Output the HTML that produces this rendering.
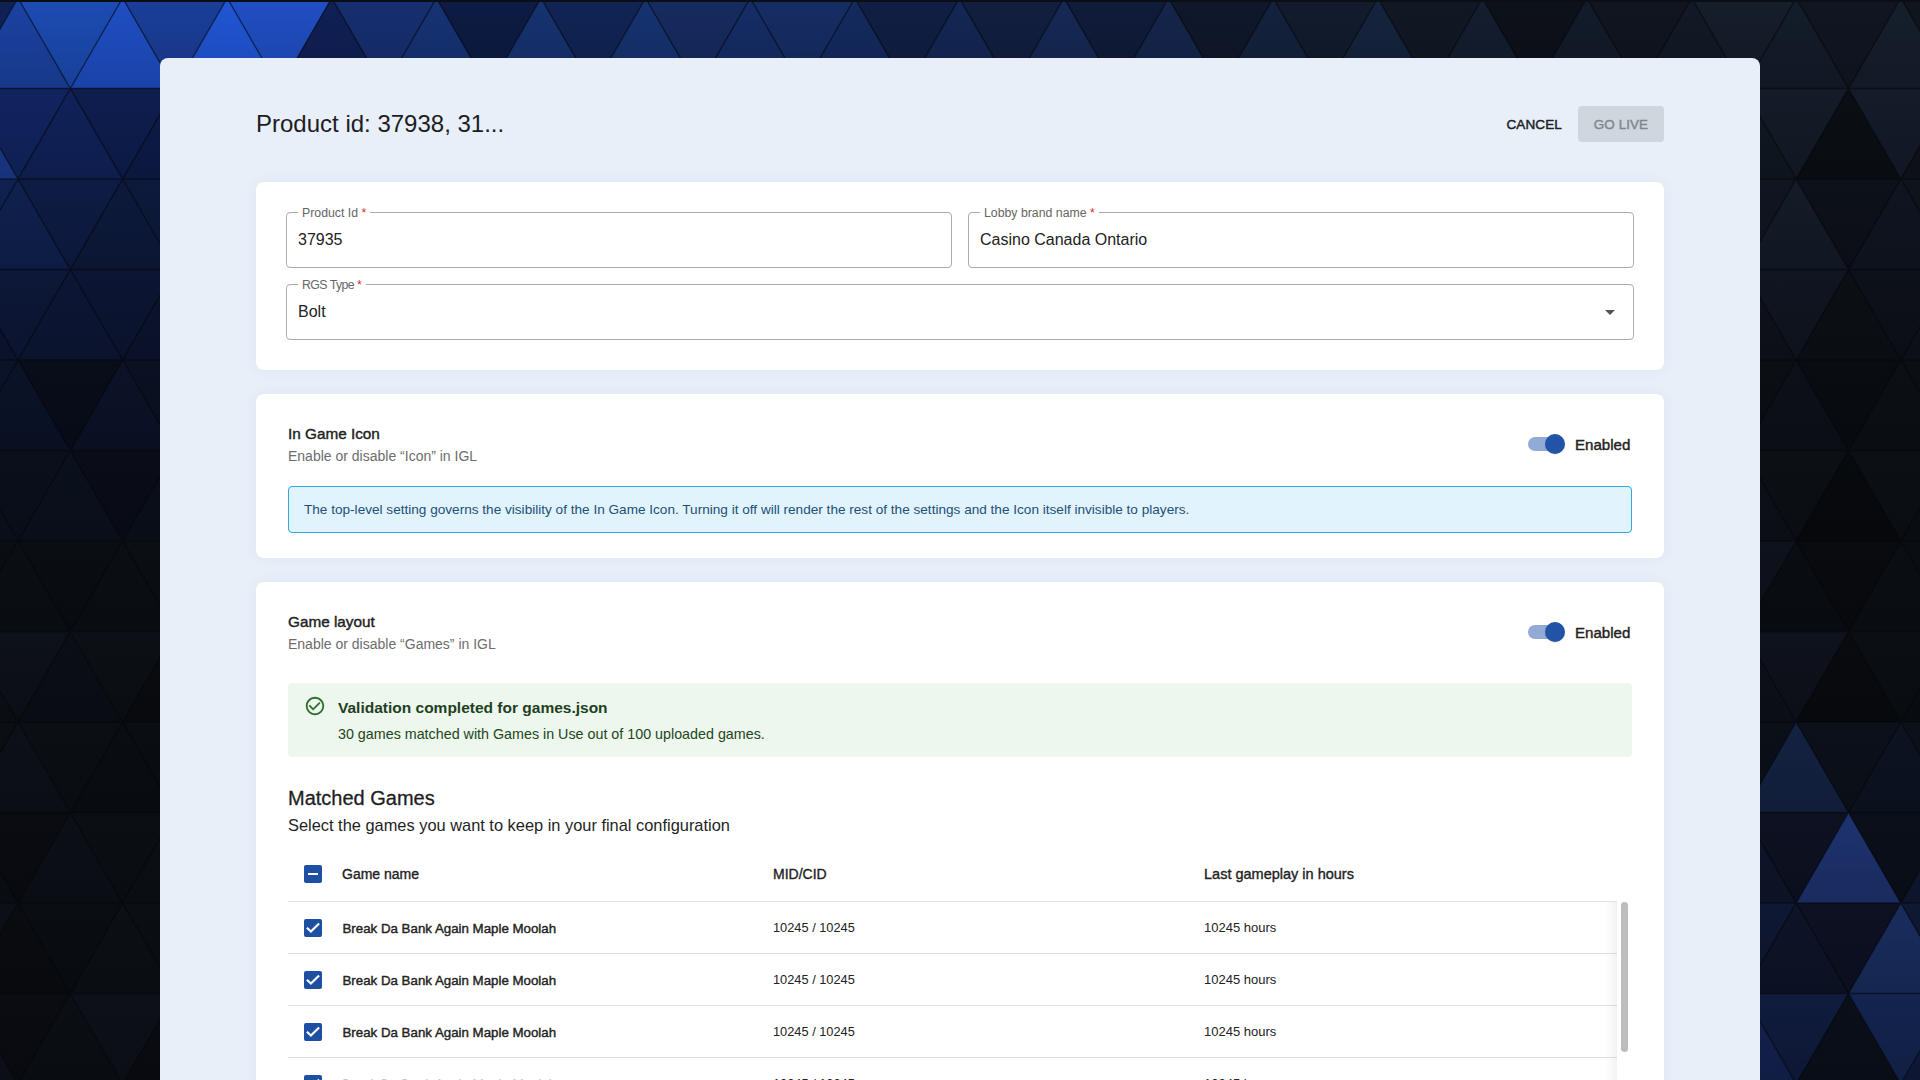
<!DOCTYPE html><html><head><meta charset="utf-8"><style>
*{margin:0;padding:0;box-sizing:border-box}
html,body{width:1920px;height:1080px;overflow:hidden;font-family:"Liberation Sans",sans-serif;color:#1f1f1f}
body{position:relative;background:#0c1220}
.abs{position:absolute}
#panel{position:absolute;left:160px;top:58px;width:1600px;height:1100px;background:#e8eff9;border-radius:8px 8px 0 0}
.card{position:absolute;left:96px;width:1408px;background:#fff;border-radius:8px;box-shadow:0 0 14px rgba(30,50,90,0.055)}
.title{position:absolute;left:96px;top:52px;font-size:24px;color:#1d1d1f;white-space:nowrap}
.btn-cancel{position:absolute;left:1346.5px;top:58.5px;font-size:13.5px;-webkit-text-stroke:0.45px #1e2126;color:#1e2126;letter-spacing:0.1px}
.btn-live{position:absolute;left:1418px;top:48px;width:86px;height:36px;border-radius:4px;background:#d0d6de;color:#7f868f;font-size:13.4px;-webkit-text-stroke:0.4px #7f868f;letter-spacing:0.1px;text-align:center;line-height:37px}
.field{position:absolute;border:1px solid #ababab;border-radius:4px;height:56px}
.field .lbl{position:absolute;left:11px;top:-7px;background:#fff;padding:0 4px;font-size:12.3px;color:#666;line-height:14px;white-space:nowrap}
.field .lbl b{color:#d32f2f;font-weight:normal}
.field .val{position:absolute;left:11px;top:18px;font-size:16px;color:#222;line-height:18px}
.sec-title{position:absolute;left:32px;font-size:15.3px;-webkit-text-stroke:0.4px #222;color:#222;white-space:nowrap}
.sec-sub{position:absolute;left:32px;font-size:14px;color:#6d6d6d}
.toggle{position:absolute;left:1271px;width:40px;height:20px}
.toggle .track{position:absolute;left:1px;top:3px;width:34px;height:14px;border-radius:7px;background:#93a9d6}
.toggle .thumb{position:absolute;left:18px;top:0;width:20px;height:20px;border-radius:50%;background:#2154a7;box-shadow:0 0.5px 1.5px rgba(0,0,0,0.15)}
.enabled{position:absolute;left:1319px;font-size:15.1px;-webkit-text-stroke:0.4px #222;color:#222}
.info{position:absolute;left:32px;width:1344px;height:47px;border:1px solid #35a6dc;border-radius:4px;background:#e1f4fd;color:#1e4f78;font-size:13.6px;padding-left:15px;line-height:45px}
.success{position:absolute;left:32px;width:1344px;height:74px;border-radius:4px;background:#edf7ed}
.th{position:absolute;font-size:14px;-webkit-text-stroke:0.35px #222;color:#222;white-space:nowrap}
.td{position:absolute;font-size:13px;color:#222;white-space:nowrap}
.cb{position:absolute;left:48px;width:18px;height:18px;border-radius:2px;background:#1f4fa3}
.row-line{position:absolute;left:32px;width:1329px;height:1px;background:#e0e0e0}
</style></head><body>
<svg width="1920" height="1080" viewBox="0 0 1920 1080" style="position:absolute;left:0;top:0">
<defs><linearGradient id="g1" x1="0" y1="0" x2="0" y2="1"><stop offset="0" stop-color="#102256"/><stop offset="1" stop-color="#0e1d48"/></linearGradient><linearGradient id="g2" x1="0" y1="0" x2="0" y2="1"><stop offset="0" stop-color="#1c42a3"/><stop offset="1" stop-color="#173889"/></linearGradient><linearGradient id="g3" x1="0" y1="0" x2="0" y2="1"><stop offset="0" stop-color="#1c4cb4"/><stop offset="1" stop-color="#174097"/></linearGradient><linearGradient id="g4" x1="0" y1="0" x2="0" y2="1"><stop offset="0" stop-color="#1f4fc5"/><stop offset="1" stop-color="#1a43a6"/></linearGradient><linearGradient id="g5" x1="0" y1="0" x2="0" y2="1"><stop offset="0" stop-color="#1a3e9a"/><stop offset="1" stop-color="#163482"/></linearGradient><linearGradient id="g6" x1="0" y1="0" x2="0" y2="1"><stop offset="0" stop-color="#2156d6"/><stop offset="1" stop-color="#1c48b4"/></linearGradient><linearGradient id="g7" x1="0" y1="0" x2="0" y2="1"><stop offset="0" stop-color="#204fc5"/><stop offset="1" stop-color="#1b43a6"/></linearGradient><linearGradient id="g8" x1="0" y1="0" x2="0" y2="1"><stop offset="0" stop-color="#102056"/><stop offset="1" stop-color="#0e1b48"/></linearGradient><linearGradient id="g9" x1="0" y1="0" x2="0" y2="1"><stop offset="0" stop-color="#162f71"/><stop offset="1" stop-color="#13285f"/></linearGradient><linearGradient id="g10" x1="0" y1="0" x2="0" y2="1"><stop offset="0" stop-color="#163376"/><stop offset="1" stop-color="#132b63"/></linearGradient><linearGradient id="g11" x1="0" y1="0" x2="0" y2="1"><stop offset="0" stop-color="#0d1c44"/><stop offset="1" stop-color="#0b173a"/></linearGradient><linearGradient id="g12" x1="0" y1="0" x2="0" y2="1"><stop offset="0" stop-color="#163371"/><stop offset="1" stop-color="#132b5f"/></linearGradient><linearGradient id="g13" x1="0" y1="0" x2="0" y2="1"><stop offset="0" stop-color="#112455"/><stop offset="1" stop-color="#0e1f47"/></linearGradient><linearGradient id="g14" x1="0" y1="0" x2="0" y2="1"><stop offset="0" stop-color="#163371"/><stop offset="1" stop-color="#132b5f"/></linearGradient><linearGradient id="g15" x1="0" y1="0" x2="0" y2="1"><stop offset="0" stop-color="#162b60"/><stop offset="1" stop-color="#132451"/></linearGradient><linearGradient id="g16" x1="0" y1="0" x2="0" y2="1"><stop offset="0" stop-color="#152d67"/><stop offset="1" stop-color="#122656"/></linearGradient><linearGradient id="g17" x1="0" y1="0" x2="0" y2="1"><stop offset="0" stop-color="#162d65"/><stop offset="1" stop-color="#132655"/></linearGradient><linearGradient id="g18" x1="0" y1="0" x2="0" y2="1"><stop offset="0" stop-color="#142b60"/><stop offset="1" stop-color="#112451"/></linearGradient><linearGradient id="g19" x1="0" y1="0" x2="0" y2="1"><stop offset="0" stop-color="#101f44"/><stop offset="1" stop-color="#0e1a3a"/></linearGradient><linearGradient id="g20" x1="0" y1="0" x2="0" y2="1"><stop offset="0" stop-color="#142755"/><stop offset="1" stop-color="#112047"/></linearGradient><linearGradient id="g21" x1="0" y1="0" x2="0" y2="1"><stop offset="0" stop-color="#121f40"/><stop offset="1" stop-color="#0f1a36"/></linearGradient><linearGradient id="g22" x1="0" y1="0" x2="0" y2="1"><stop offset="0" stop-color="#162955"/><stop offset="1" stop-color="#132247"/></linearGradient><linearGradient id="g23" x1="0" y1="0" x2="0" y2="1"><stop offset="0" stop-color="#0f1c3a"/><stop offset="1" stop-color="#0d1731"/></linearGradient><linearGradient id="g24" x1="0" y1="0" x2="0" y2="1"><stop offset="0" stop-color="#15254c"/><stop offset="1" stop-color="#122040"/></linearGradient><linearGradient id="g25" x1="0" y1="0" x2="0" y2="1"><stop offset="0" stop-color="#0f182b"/><stop offset="1" stop-color="#0d1424"/></linearGradient><linearGradient id="g26" x1="0" y1="0" x2="0" y2="1"><stop offset="0" stop-color="#14223e"/><stop offset="1" stop-color="#111d34"/></linearGradient><linearGradient id="g27" x1="0" y1="0" x2="0" y2="1"><stop offset="0" stop-color="#121c2d"/><stop offset="1" stop-color="#0f1726"/></linearGradient><linearGradient id="g28" x1="0" y1="0" x2="0" y2="1"><stop offset="0" stop-color="#15243e"/><stop offset="1" stop-color="#121f34"/></linearGradient><linearGradient id="g29" x1="0" y1="0" x2="0" y2="1"><stop offset="0" stop-color="#111824"/><stop offset="1" stop-color="#0e141f"/></linearGradient><linearGradient id="g30" x1="0" y1="0" x2="0" y2="1"><stop offset="0" stop-color="#141e2f"/><stop offset="1" stop-color="#111928"/></linearGradient><linearGradient id="g31" x1="0" y1="0" x2="0" y2="1"><stop offset="0" stop-color="#0d111a"/><stop offset="1" stop-color="#0b0e16"/></linearGradient><linearGradient id="g32" x1="0" y1="0" x2="0" y2="1"><stop offset="0" stop-color="#131c2b"/><stop offset="1" stop-color="#101724"/></linearGradient><linearGradient id="g33" x1="0" y1="0" x2="0" y2="1"><stop offset="0" stop-color="#101520"/><stop offset="1" stop-color="#0e121b"/></linearGradient><linearGradient id="g34" x1="0" y1="0" x2="0" y2="1"><stop offset="0" stop-color="#121a27"/><stop offset="1" stop-color="#0f1620"/></linearGradient><linearGradient id="g35" x1="0" y1="0" x2="0" y2="1"><stop offset="0" stop-color="#151e2b"/><stop offset="1" stop-color="#121924"/></linearGradient><linearGradient id="g36" x1="0" y1="0" x2="0" y2="1"><stop offset="0" stop-color="#141d2b"/><stop offset="1" stop-color="#111824"/></linearGradient><linearGradient id="g37" x1="0" y1="0" x2="0" y2="1"><stop offset="0" stop-color="#101622"/><stop offset="1" stop-color="#0e131d"/></linearGradient><linearGradient id="g38" x1="0" y1="0" x2="0" y2="1"><stop offset="0" stop-color="#161f2d"/><stop offset="1" stop-color="#131a26"/></linearGradient><linearGradient id="g39" x1="0" y1="0" x2="0" y2="1"><stop offset="0" stop-color="#10151e"/><stop offset="1" stop-color="#0e1219"/></linearGradient><linearGradient id="g40" x1="0" y1="0" x2="0" y2="1"><stop offset="0" stop-color="#1a3c8f"/><stop offset="1" stop-color="#163279"/></linearGradient><linearGradient id="g41" x1="0" y1="0" x2="0" y2="1"><stop offset="0" stop-color="#112460"/><stop offset="1" stop-color="#0e1f51"/></linearGradient><linearGradient id="g42" x1="0" y1="0" x2="0" y2="1"><stop offset="0" stop-color="#10225a"/><stop offset="1" stop-color="#0e1d4c"/></linearGradient><linearGradient id="g43" x1="0" y1="0" x2="0" y2="1"><stop offset="0" stop-color="#0e1e4f"/><stop offset="1" stop-color="#0c1943"/></linearGradient><linearGradient id="g44" x1="0" y1="0" x2="0" y2="1"><stop offset="0" stop-color="#0d1c49"/><stop offset="1" stop-color="#0b173d"/></linearGradient><linearGradient id="g45" x1="0" y1="0" x2="0" y2="1"><stop offset="0" stop-color="#101822"/><stop offset="1" stop-color="#0e141d"/></linearGradient><linearGradient id="g46" x1="0" y1="0" x2="0" y2="1"><stop offset="0" stop-color="#131c28"/><stop offset="1" stop-color="#101721"/></linearGradient><linearGradient id="g47" x1="0" y1="0" x2="0" y2="1"><stop offset="0" stop-color="#0b0f15"/><stop offset="1" stop-color="#090d12"/></linearGradient><linearGradient id="g48" x1="0" y1="0" x2="0" y2="1"><stop offset="0" stop-color="#141c2a"/><stop offset="1" stop-color="#111723"/></linearGradient><linearGradient id="g49" x1="0" y1="0" x2="0" y2="1"><stop offset="0" stop-color="#0f131c"/><stop offset="1" stop-color="#0d1017"/></linearGradient><linearGradient id="g50" x1="0" y1="0" x2="0" y2="1"><stop offset="0" stop-color="#102151"/><stop offset="1" stop-color="#0e1c44"/></linearGradient><linearGradient id="g51" x1="0" y1="0" x2="0" y2="1"><stop offset="0" stop-color="#10214f"/><stop offset="1" stop-color="#0e1c43"/></linearGradient><linearGradient id="g52" x1="0" y1="0" x2="0" y2="1"><stop offset="0" stop-color="#0e1c44"/><stop offset="1" stop-color="#0c173a"/></linearGradient><linearGradient id="g53" x1="0" y1="0" x2="0" y2="1"><stop offset="0" stop-color="#0d1a3c"/><stop offset="1" stop-color="#0b1632"/></linearGradient><linearGradient id="g54" x1="0" y1="0" x2="0" y2="1"><stop offset="0" stop-color="#0d1a3c"/><stop offset="1" stop-color="#0b1632"/></linearGradient><linearGradient id="g55" x1="0" y1="0" x2="0" y2="1"><stop offset="0" stop-color="#101521"/><stop offset="1" stop-color="#0e121c"/></linearGradient><linearGradient id="g56" x1="0" y1="0" x2="0" y2="1"><stop offset="0" stop-color="#141c28"/><stop offset="1" stop-color="#111721"/></linearGradient><linearGradient id="g57" x1="0" y1="0" x2="0" y2="1"><stop offset="0" stop-color="#0d111a"/><stop offset="1" stop-color="#0b0e16"/></linearGradient><linearGradient id="g58" x1="0" y1="0" x2="0" y2="1"><stop offset="0" stop-color="#0f1521"/><stop offset="1" stop-color="#0d121c"/></linearGradient><linearGradient id="g59" x1="0" y1="0" x2="0" y2="1"><stop offset="0" stop-color="#0f131c"/><stop offset="1" stop-color="#0d1017"/></linearGradient><linearGradient id="g60" x1="0" y1="0" x2="0" y2="1"><stop offset="0" stop-color="#0c1533"/><stop offset="1" stop-color="#0a122b"/></linearGradient><linearGradient id="g61" x1="0" y1="0" x2="0" y2="1"><stop offset="0" stop-color="#0d1838"/><stop offset="1" stop-color="#0b142f"/></linearGradient><linearGradient id="g62" x1="0" y1="0" x2="0" y2="1"><stop offset="0" stop-color="#0d1636"/><stop offset="1" stop-color="#0b132d"/></linearGradient><linearGradient id="g63" x1="0" y1="0" x2="0" y2="1"><stop offset="0" stop-color="#0c1533"/><stop offset="1" stop-color="#0a122b"/></linearGradient><linearGradient id="g64" x1="0" y1="0" x2="0" y2="1"><stop offset="0" stop-color="#0c142f"/><stop offset="1" stop-color="#0a1128"/></linearGradient><linearGradient id="g65" x1="0" y1="0" x2="0" y2="1"><stop offset="0" stop-color="#0e121c"/><stop offset="1" stop-color="#0c0f17"/></linearGradient><linearGradient id="g66" x1="0" y1="0" x2="0" y2="1"><stop offset="0" stop-color="#101521"/><stop offset="1" stop-color="#0e121c"/></linearGradient><linearGradient id="g67" x1="0" y1="0" x2="0" y2="1"><stop offset="0" stop-color="#0c0f15"/><stop offset="1" stop-color="#0a0d12"/></linearGradient><linearGradient id="g68" x1="0" y1="0" x2="0" y2="1"><stop offset="0" stop-color="#0d111a"/><stop offset="1" stop-color="#0b0e16"/></linearGradient><linearGradient id="g69" x1="0" y1="0" x2="0" y2="1"><stop offset="0" stop-color="#0e121c"/><stop offset="1" stop-color="#0c0f17"/></linearGradient><linearGradient id="g70" x1="0" y1="0" x2="0" y2="1"><stop offset="0" stop-color="#0b1329"/><stop offset="1" stop-color="#091022"/></linearGradient><linearGradient id="g71" x1="0" y1="0" x2="0" y2="1"><stop offset="0" stop-color="#0b1329"/><stop offset="1" stop-color="#091022"/></linearGradient><linearGradient id="g72" x1="0" y1="0" x2="0" y2="1"><stop offset="0" stop-color="#090d1a"/><stop offset="1" stop-color="#070b16"/></linearGradient><linearGradient id="g73" x1="0" y1="0" x2="0" y2="1"><stop offset="0" stop-color="#0c1329"/><stop offset="1" stop-color="#0a1022"/></linearGradient><linearGradient id="g74" x1="0" y1="0" x2="0" y2="1"><stop offset="0" stop-color="#0b1122"/><stop offset="1" stop-color="#090e1d"/></linearGradient><linearGradient id="g75" x1="0" y1="0" x2="0" y2="1"><stop offset="0" stop-color="#0b0f14"/><stop offset="1" stop-color="#090d11"/></linearGradient><linearGradient id="g76" x1="0" y1="0" x2="0" y2="1"><stop offset="0" stop-color="#0d1018"/><stop offset="1" stop-color="#0b0e14"/></linearGradient><linearGradient id="g77" x1="0" y1="0" x2="0" y2="1"><stop offset="0" stop-color="#090c11"/><stop offset="1" stop-color="#070a0e"/></linearGradient><linearGradient id="g78" x1="0" y1="0" x2="0" y2="1"><stop offset="0" stop-color="#0c0f15"/><stop offset="1" stop-color="#0a0d12"/></linearGradient><linearGradient id="g79" x1="0" y1="0" x2="0" y2="1"><stop offset="0" stop-color="#0b0e14"/><stop offset="1" stop-color="#090c11"/></linearGradient><linearGradient id="g80" x1="0" y1="0" x2="0" y2="1"><stop offset="0" stop-color="#0b101e"/><stop offset="1" stop-color="#090e19"/></linearGradient><linearGradient id="g81" x1="0" y1="0" x2="0" y2="1"><stop offset="0" stop-color="#0b0f1c"/><stop offset="1" stop-color="#090d17"/></linearGradient><linearGradient id="g82" x1="0" y1="0" x2="0" y2="1"><stop offset="0" stop-color="#0b101e"/><stop offset="1" stop-color="#090e19"/></linearGradient><linearGradient id="g83" x1="0" y1="0" x2="0" y2="1"><stop offset="0" stop-color="#0a0d18"/><stop offset="1" stop-color="#080b14"/></linearGradient><linearGradient id="g84" x1="0" y1="0" x2="0" y2="1"><stop offset="0" stop-color="#0b0f1c"/><stop offset="1" stop-color="#090d17"/></linearGradient><linearGradient id="g85" x1="0" y1="0" x2="0" y2="1"><stop offset="0" stop-color="#0d1018"/><stop offset="1" stop-color="#0b0e14"/></linearGradient><linearGradient id="g86" x1="0" y1="0" x2="0" y2="1"><stop offset="0" stop-color="#0c0f15"/><stop offset="1" stop-color="#0a0d12"/></linearGradient><linearGradient id="g87" x1="0" y1="0" x2="0" y2="1"><stop offset="0" stop-color="#070a0e"/><stop offset="1" stop-color="#06080c"/></linearGradient><linearGradient id="g88" x1="0" y1="0" x2="0" y2="1"><stop offset="0" stop-color="#0c0f15"/><stop offset="1" stop-color="#0a0d12"/></linearGradient><linearGradient id="g89" x1="0" y1="0" x2="0" y2="1"><stop offset="0" stop-color="#0b0e13"/><stop offset="1" stop-color="#090c10"/></linearGradient><linearGradient id="g90" x1="0" y1="0" x2="0" y2="1"><stop offset="0" stop-color="#0a0d12"/><stop offset="1" stop-color="#080b0f"/></linearGradient><linearGradient id="g91" x1="0" y1="0" x2="0" y2="1"><stop offset="0" stop-color="#0b0f15"/><stop offset="1" stop-color="#090d12"/></linearGradient><linearGradient id="g92" x1="0" y1="0" x2="0" y2="1"><stop offset="0" stop-color="#0a0d13"/><stop offset="1" stop-color="#080b10"/></linearGradient><linearGradient id="g93" x1="0" y1="0" x2="0" y2="1"><stop offset="0" stop-color="#0b0e13"/><stop offset="1" stop-color="#090c10"/></linearGradient><linearGradient id="g94" x1="0" y1="0" x2="0" y2="1"><stop offset="0" stop-color="#0b0e14"/><stop offset="1" stop-color="#090c11"/></linearGradient><linearGradient id="g95" x1="0" y1="0" x2="0" y2="1"><stop offset="0" stop-color="#0e121c"/><stop offset="1" stop-color="#0c0f17"/></linearGradient><linearGradient id="g96" x1="0" y1="0" x2="0" y2="1"><stop offset="0" stop-color="#0a0d12"/><stop offset="1" stop-color="#080b0f"/></linearGradient><linearGradient id="g97" x1="0" y1="0" x2="0" y2="1"><stop offset="0" stop-color="#090b0f"/><stop offset="1" stop-color="#07090d"/></linearGradient><linearGradient id="g98" x1="0" y1="0" x2="0" y2="1"><stop offset="0" stop-color="#0b0e13"/><stop offset="1" stop-color="#090c10"/></linearGradient><linearGradient id="g99" x1="0" y1="0" x2="0" y2="1"><stop offset="0" stop-color="#0a0d12"/><stop offset="1" stop-color="#080b0f"/></linearGradient><linearGradient id="g100" x1="0" y1="0" x2="0" y2="1"><stop offset="0" stop-color="#0c1016"/><stop offset="1" stop-color="#0a0e13"/></linearGradient><linearGradient id="g101" x1="0" y1="0" x2="0" y2="1"><stop offset="0" stop-color="#0d1119"/><stop offset="1" stop-color="#0b0e15"/></linearGradient><linearGradient id="g102" x1="0" y1="0" x2="0" y2="1"><stop offset="0" stop-color="#0b0e15"/><stop offset="1" stop-color="#090c12"/></linearGradient><linearGradient id="g103" x1="0" y1="0" x2="0" y2="1"><stop offset="0" stop-color="#0c1016"/><stop offset="1" stop-color="#0a0e13"/></linearGradient><linearGradient id="g104" x1="0" y1="0" x2="0" y2="1"><stop offset="0" stop-color="#0a0c11"/><stop offset="1" stop-color="#080a0e"/></linearGradient><linearGradient id="g105" x1="0" y1="0" x2="0" y2="1"><stop offset="0" stop-color="#0d1018"/><stop offset="1" stop-color="#0b0e14"/></linearGradient><linearGradient id="g106" x1="0" y1="0" x2="0" y2="1"><stop offset="0" stop-color="#0e121c"/><stop offset="1" stop-color="#0c0f17"/></linearGradient><linearGradient id="g107" x1="0" y1="0" x2="0" y2="1"><stop offset="0" stop-color="#090b0f"/><stop offset="1" stop-color="#07090d"/></linearGradient><linearGradient id="g108" x1="0" y1="0" x2="0" y2="1"><stop offset="0" stop-color="#0b0e13"/><stop offset="1" stop-color="#090c10"/></linearGradient><linearGradient id="g109" x1="0" y1="0" x2="0" y2="1"><stop offset="0" stop-color="#0a0d12"/><stop offset="1" stop-color="#080b0f"/></linearGradient><linearGradient id="g110" x1="0" y1="0" x2="0" y2="1"><stop offset="0" stop-color="#0b0e13"/><stop offset="1" stop-color="#090c10"/></linearGradient><linearGradient id="g111" x1="0" y1="0" x2="0" y2="1"><stop offset="0" stop-color="#0d1018"/><stop offset="1" stop-color="#0b0e14"/></linearGradient><linearGradient id="g112" x1="0" y1="0" x2="0" y2="1"><stop offset="0" stop-color="#0b0f15"/><stop offset="1" stop-color="#090d12"/></linearGradient><linearGradient id="g113" x1="0" y1="0" x2="0" y2="1"><stop offset="0" stop-color="#0a0d13"/><stop offset="1" stop-color="#080b10"/></linearGradient><linearGradient id="g114" x1="0" y1="0" x2="0" y2="1"><stop offset="0" stop-color="#0a0d12"/><stop offset="1" stop-color="#080b0f"/></linearGradient><linearGradient id="g115" x1="0" y1="0" x2="0" y2="1"><stop offset="0" stop-color="#0b0f18"/><stop offset="1" stop-color="#090d14"/></linearGradient><linearGradient id="g116" x1="0" y1="0" x2="0" y2="1"><stop offset="0" stop-color="#142242"/><stop offset="1" stop-color="#111d38"/></linearGradient><linearGradient id="g117" x1="0" y1="0" x2="0" y2="1"><stop offset="0" stop-color="#0c101a"/><stop offset="1" stop-color="#0a0e16"/></linearGradient><linearGradient id="g118" x1="0" y1="0" x2="0" y2="1"><stop offset="0" stop-color="#0d1322"/><stop offset="1" stop-color="#0b101d"/></linearGradient><linearGradient id="g119" x1="0" y1="0" x2="0" y2="1"><stop offset="0" stop-color="#0c101a"/><stop offset="1" stop-color="#0a0e16"/></linearGradient><linearGradient id="g120" x1="0" y1="0" x2="0" y2="1"><stop offset="0" stop-color="#0b0e13"/><stop offset="1" stop-color="#090c10"/></linearGradient><linearGradient id="g121" x1="0" y1="0" x2="0" y2="1"><stop offset="0" stop-color="#0a0c12"/><stop offset="1" stop-color="#080a0f"/></linearGradient><linearGradient id="g122" x1="0" y1="0" x2="0" y2="1"><stop offset="0" stop-color="#0c0f16"/><stop offset="1" stop-color="#0a0d13"/></linearGradient><linearGradient id="g123" x1="0" y1="0" x2="0" y2="1"><stop offset="0" stop-color="#0b0e14"/><stop offset="1" stop-color="#090c11"/></linearGradient><linearGradient id="g124" x1="0" y1="0" x2="0" y2="1"><stop offset="0" stop-color="#0c0f15"/><stop offset="1" stop-color="#0a0d12"/></linearGradient><linearGradient id="g125" x1="0" y1="0" x2="0" y2="1"><stop offset="0" stop-color="#0f152b"/><stop offset="1" stop-color="#0d1224"/></linearGradient><linearGradient id="g126" x1="0" y1="0" x2="0" y2="1"><stop offset="0" stop-color="#0d1222"/><stop offset="1" stop-color="#0b0f1d"/></linearGradient><linearGradient id="g127" x1="0" y1="0" x2="0" y2="1"><stop offset="0" stop-color="#1e336f"/><stop offset="1" stop-color="#192b5e"/></linearGradient><linearGradient id="g128" x1="0" y1="0" x2="0" y2="1"><stop offset="0" stop-color="#0b0f1a"/><stop offset="1" stop-color="#090d16"/></linearGradient><linearGradient id="g129" x1="0" y1="0" x2="0" y2="1"><stop offset="0" stop-color="#0f1833"/><stop offset="1" stop-color="#0d142b"/></linearGradient><linearGradient id="g130" x1="0" y1="0" x2="0" y2="1"><stop offset="0" stop-color="#0c0f16"/><stop offset="1" stop-color="#0a0d13"/></linearGradient><linearGradient id="g131" x1="0" y1="0" x2="0" y2="1"><stop offset="0" stop-color="#0a0c11"/><stop offset="1" stop-color="#080a0e"/></linearGradient><linearGradient id="g132" x1="0" y1="0" x2="0" y2="1"><stop offset="0" stop-color="#0a0d13"/><stop offset="1" stop-color="#080b10"/></linearGradient><linearGradient id="g133" x1="0" y1="0" x2="0" y2="1"><stop offset="0" stop-color="#0c0f15"/><stop offset="1" stop-color="#0a0d12"/></linearGradient><linearGradient id="g134" x1="0" y1="0" x2="0" y2="1"><stop offset="0" stop-color="#0b0e14"/><stop offset="1" stop-color="#090c11"/></linearGradient><linearGradient id="g135" x1="0" y1="0" x2="0" y2="1"><stop offset="0" stop-color="#0f1833"/><stop offset="1" stop-color="#0d142b"/></linearGradient><linearGradient id="g136" x1="0" y1="0" x2="0" y2="1"><stop offset="0" stop-color="#0e1429"/><stop offset="1" stop-color="#0c1122"/></linearGradient><linearGradient id="g137" x1="0" y1="0" x2="0" y2="1"><stop offset="0" stop-color="#0d1122"/><stop offset="1" stop-color="#0b0e1d"/></linearGradient><linearGradient id="g138" x1="0" y1="0" x2="0" y2="1"><stop offset="0" stop-color="#192d5e"/><stop offset="1" stop-color="#15264f"/></linearGradient><linearGradient id="g139" x1="0" y1="0" x2="0" y2="1"><stop offset="0" stop-color="#0f1833"/><stop offset="1" stop-color="#0d142b"/></linearGradient><linearGradient id="g140" x1="0" y1="0" x2="0" y2="1"><stop offset="0" stop-color="#0d1019"/><stop offset="1" stop-color="#0b0e15"/></linearGradient><linearGradient id="g141" x1="0" y1="0" x2="0" y2="1"><stop offset="0" stop-color="#0a0c12"/><stop offset="1" stop-color="#080a0f"/></linearGradient><linearGradient id="g142" x1="0" y1="0" x2="0" y2="1"><stop offset="0" stop-color="#0b0e14"/><stop offset="1" stop-color="#090c11"/></linearGradient><linearGradient id="g143" x1="0" y1="0" x2="0" y2="1"><stop offset="0" stop-color="#0d1018"/><stop offset="1" stop-color="#0b0e14"/></linearGradient><linearGradient id="g144" x1="0" y1="0" x2="0" y2="1"><stop offset="0" stop-color="#0a0c12"/><stop offset="1" stop-color="#080a0f"/></linearGradient><linearGradient id="g145" x1="0" y1="0" x2="0" y2="1"><stop offset="0" stop-color="#13224f"/><stop offset="1" stop-color="#101d43"/></linearGradient><linearGradient id="g146" x1="0" y1="0" x2="0" y2="1"><stop offset="0" stop-color="#101c3e"/><stop offset="1" stop-color="#0e1734"/></linearGradient><linearGradient id="g147" x1="0" y1="0" x2="0" y2="1"><stop offset="0" stop-color="#0b0f1a"/><stop offset="1" stop-color="#090d16"/></linearGradient><linearGradient id="g148" x1="0" y1="0" x2="0" y2="1"><stop offset="0" stop-color="#14244f"/><stop offset="1" stop-color="#111f43"/></linearGradient><linearGradient id="g149" x1="0" y1="0" x2="0" y2="1"><stop offset="0" stop-color="#111a3e"/><stop offset="1" stop-color="#0e1634"/></linearGradient><linearGradient id="g150" x1="0" y1="0" x2="0" y2="1"><stop offset="0" stop-color="#0c1016"/><stop offset="1" stop-color="#0a0e13"/></linearGradient><linearGradient id="g151" x1="0" y1="0" x2="0" y2="1"><stop offset="0" stop-color="#0c0f16"/><stop offset="1" stop-color="#0a0d13"/></linearGradient><linearGradient id="g152" x1="0" y1="0" x2="0" y2="1"><stop offset="0" stop-color="#0d1119"/><stop offset="1" stop-color="#0b0e15"/></linearGradient><linearGradient id="g153" x1="0" y1="0" x2="0" y2="1"><stop offset="0" stop-color="#0a0c12"/><stop offset="1" stop-color="#080a0f"/></linearGradient><linearGradient id="g154" x1="0" y1="0" x2="0" y2="1"><stop offset="0" stop-color="#0b0e14"/><stop offset="1" stop-color="#090c11"/></linearGradient><linearGradient id="g155" x1="0" y1="0" x2="0" y2="1"><stop offset="0" stop-color="#101c3e"/><stop offset="1" stop-color="#0e1734"/></linearGradient><linearGradient id="g156" x1="0" y1="0" x2="0" y2="1"><stop offset="0" stop-color="#0f1833"/><stop offset="1" stop-color="#0d142b"/></linearGradient><linearGradient id="g157" x1="0" y1="0" x2="0" y2="1"><stop offset="0" stop-color="#0d132b"/><stop offset="1" stop-color="#0b1024"/></linearGradient><linearGradient id="g158" x1="0" y1="0" x2="0" y2="1"><stop offset="0" stop-color="#0f1833"/><stop offset="1" stop-color="#0d142b"/></linearGradient><linearGradient id="g159" x1="0" y1="0" x2="0" y2="1"><stop offset="0" stop-color="#0c0f16"/><stop offset="1" stop-color="#0a0d13"/></linearGradient></defs>
<rect width="1920" height="1080" fill="#0a0d13"/>
<path d="M-86.6 -2.0L18.0 -2.0L-34.3 88.5Z" fill="url(#g1)"/>
<path d="M18.0 -2.0L70.3 88.5L-34.3 88.5Z" fill="url(#g2)"/>
<path d="M18.0 -2.0L122.6 -2.0L70.3 88.5Z" fill="url(#g3)"/>
<path d="M122.6 -2.0L174.9 88.5L70.3 88.5Z" fill="url(#g4)"/>
<path d="M122.6 -2.0L227.2 -2.0L174.9 88.5Z" fill="url(#g5)"/>
<path d="M227.2 -2.0L279.5 88.5L174.9 88.5Z" fill="url(#g6)"/>
<path d="M227.2 -2.0L331.8 -2.0L279.5 88.5Z" fill="url(#g7)"/>
<path d="M331.8 -2.0L384.1 88.5L279.5 88.5Z" fill="url(#g8)"/>
<path d="M331.8 -2.0L436.4 -2.0L384.1 88.5Z" fill="url(#g9)"/>
<path d="M436.4 -2.0L488.7 88.5L384.1 88.5Z" fill="url(#g10)"/>
<path d="M436.4 -2.0L541.0 -2.0L488.7 88.5Z" fill="url(#g11)"/>
<path d="M541.0 -2.0L593.3 88.5L488.7 88.5Z" fill="url(#g12)"/>
<path d="M541.0 -2.0L645.6 -2.0L593.3 88.5Z" fill="url(#g13)"/>
<path d="M645.6 -2.0L697.9 88.5L593.3 88.5Z" fill="url(#g14)"/>
<path d="M645.6 -2.0L750.2 -2.0L697.9 88.5Z" fill="url(#g15)"/>
<path d="M750.2 -2.0L802.5 88.5L697.9 88.5Z" fill="url(#g16)"/>
<path d="M750.2 -2.0L854.8 -2.0L802.5 88.5Z" fill="url(#g17)"/>
<path d="M854.8 -2.0L907.1 88.5L802.5 88.5Z" fill="url(#g18)"/>
<path d="M854.8 -2.0L959.4 -2.0L907.1 88.5Z" fill="url(#g19)"/>
<path d="M959.4 -2.0L1011.7 88.5L907.1 88.5Z" fill="url(#g20)"/>
<path d="M959.4 -2.0L1064.0 -2.0L1011.7 88.5Z" fill="url(#g21)"/>
<path d="M1064.0 -2.0L1116.3 88.5L1011.7 88.5Z" fill="url(#g22)"/>
<path d="M1064.0 -2.0L1168.6 -2.0L1116.3 88.5Z" fill="url(#g23)"/>
<path d="M1168.6 -2.0L1220.9 88.5L1116.3 88.5Z" fill="url(#g24)"/>
<path d="M1168.6 -2.0L1273.2 -2.0L1220.9 88.5Z" fill="url(#g25)"/>
<path d="M1273.2 -2.0L1325.5 88.5L1220.9 88.5Z" fill="url(#g26)"/>
<path d="M1273.2 -2.0L1377.8 -2.0L1325.5 88.5Z" fill="url(#g27)"/>
<path d="M1377.8 -2.0L1430.1 88.5L1325.5 88.5Z" fill="url(#g28)"/>
<path d="M1377.8 -2.0L1482.4 -2.0L1430.1 88.5Z" fill="url(#g29)"/>
<path d="M1482.4 -2.0L1534.7 88.5L1430.1 88.5Z" fill="url(#g30)"/>
<path d="M1482.4 -2.0L1587.0 -2.0L1534.7 88.5Z" fill="url(#g31)"/>
<path d="M1587.0 -2.0L1639.3 88.5L1534.7 88.5Z" fill="url(#g32)"/>
<path d="M1587.0 -2.0L1691.6 -2.0L1639.3 88.5Z" fill="url(#g33)"/>
<path d="M1691.6 -2.0L1743.9 88.5L1639.3 88.5Z" fill="url(#g34)"/>
<path d="M1691.6 -2.0L1796.2 -2.0L1743.9 88.5Z" fill="url(#g35)"/>
<path d="M1796.2 -2.0L1848.5 88.5L1743.9 88.5Z" fill="url(#g36)"/>
<path d="M1796.2 -2.0L1900.8 -2.0L1848.5 88.5Z" fill="url(#g37)"/>
<path d="M1900.8 -2.0L1953.1 88.5L1848.5 88.5Z" fill="url(#g38)"/>
<path d="M1900.8 -2.0L2005.4 -2.0L1953.1 88.5Z" fill="url(#g39)"/>
<path d="M-34.3 88.5L18.0 179.0L-86.6 179.0Z" fill="url(#g40)"/>
<path d="M-34.3 88.5L70.3 88.5L18.0 179.0Z" fill="url(#g41)"/>
<path d="M70.3 88.5L122.6 179.0L18.0 179.0Z" fill="url(#g42)"/>
<path d="M70.3 88.5L174.9 88.5L122.6 179.0Z" fill="url(#g43)"/>
<path d="M174.9 88.5L227.2 179.0L122.6 179.0Z" fill="url(#g44)"/>
<path d="M1743.9 88.5L1796.2 179.0L1691.6 179.0Z" fill="url(#g45)"/>
<path d="M1743.9 88.5L1848.5 88.5L1796.2 179.0Z" fill="url(#g46)"/>
<path d="M1848.5 88.5L1900.8 179.0L1796.2 179.0Z" fill="url(#g47)"/>
<path d="M1848.5 88.5L1953.1 88.5L1900.8 179.0Z" fill="url(#g48)"/>
<path d="M1953.1 88.5L2005.4 179.0L1900.8 179.0Z" fill="url(#g49)"/>
<path d="M-86.6 179.0L18.0 179.0L-34.3 269.5Z" fill="url(#g50)"/>
<path d="M18.0 179.0L70.3 269.5L-34.3 269.5Z" fill="url(#g51)"/>
<path d="M18.0 179.0L122.6 179.0L70.3 269.5Z" fill="url(#g52)"/>
<path d="M122.6 179.0L174.9 269.5L70.3 269.5Z" fill="url(#g53)"/>
<path d="M122.6 179.0L227.2 179.0L174.9 269.5Z" fill="url(#g54)"/>
<path d="M1691.6 179.0L1796.2 179.0L1743.9 269.5Z" fill="url(#g55)"/>
<path d="M1796.2 179.0L1848.5 269.5L1743.9 269.5Z" fill="url(#g56)"/>
<path d="M1796.2 179.0L1900.8 179.0L1848.5 269.5Z" fill="url(#g57)"/>
<path d="M1900.8 179.0L1953.1 269.5L1848.5 269.5Z" fill="url(#g58)"/>
<path d="M1900.8 179.0L2005.4 179.0L1953.1 269.5Z" fill="url(#g59)"/>
<path d="M-34.3 269.5L18.0 360.0L-86.6 360.0Z" fill="url(#g60)"/>
<path d="M-34.3 269.5L70.3 269.5L18.0 360.0Z" fill="url(#g61)"/>
<path d="M70.3 269.5L122.6 360.0L18.0 360.0Z" fill="url(#g62)"/>
<path d="M70.3 269.5L174.9 269.5L122.6 360.0Z" fill="url(#g63)"/>
<path d="M174.9 269.5L227.2 360.0L122.6 360.0Z" fill="url(#g64)"/>
<path d="M1743.9 269.5L1796.2 360.0L1691.6 360.0Z" fill="url(#g65)"/>
<path d="M1743.9 269.5L1848.5 269.5L1796.2 360.0Z" fill="url(#g66)"/>
<path d="M1848.5 269.5L1900.8 360.0L1796.2 360.0Z" fill="url(#g67)"/>
<path d="M1848.5 269.5L1953.1 269.5L1900.8 360.0Z" fill="url(#g68)"/>
<path d="M1953.1 269.5L2005.4 360.0L1900.8 360.0Z" fill="url(#g69)"/>
<path d="M-86.6 360.0L18.0 360.0L-34.3 450.5Z" fill="url(#g70)"/>
<path d="M18.0 360.0L70.3 450.5L-34.3 450.5Z" fill="url(#g71)"/>
<path d="M18.0 360.0L122.6 360.0L70.3 450.5Z" fill="url(#g72)"/>
<path d="M122.6 360.0L174.9 450.5L70.3 450.5Z" fill="url(#g73)"/>
<path d="M122.6 360.0L227.2 360.0L174.9 450.5Z" fill="url(#g74)"/>
<path d="M1691.6 360.0L1796.2 360.0L1743.9 450.5Z" fill="url(#g75)"/>
<path d="M1796.2 360.0L1848.5 450.5L1743.9 450.5Z" fill="url(#g76)"/>
<path d="M1796.2 360.0L1900.8 360.0L1848.5 450.5Z" fill="url(#g77)"/>
<path d="M1900.8 360.0L1953.1 450.5L1848.5 450.5Z" fill="url(#g78)"/>
<path d="M1900.8 360.0L2005.4 360.0L1953.1 450.5Z" fill="url(#g79)"/>
<path d="M-34.3 450.5L18.0 541.0L-86.6 541.0Z" fill="url(#g80)"/>
<path d="M-34.3 450.5L70.3 450.5L18.0 541.0Z" fill="url(#g81)"/>
<path d="M70.3 450.5L122.6 541.0L18.0 541.0Z" fill="url(#g82)"/>
<path d="M70.3 450.5L174.9 450.5L122.6 541.0Z" fill="url(#g83)"/>
<path d="M174.9 450.5L227.2 541.0L122.6 541.0Z" fill="url(#g84)"/>
<path d="M1743.9 450.5L1796.2 541.0L1691.6 541.0Z" fill="url(#g85)"/>
<path d="M1743.9 450.5L1848.5 450.5L1796.2 541.0Z" fill="url(#g86)"/>
<path d="M1848.5 450.5L1900.8 541.0L1796.2 541.0Z" fill="url(#g87)"/>
<path d="M1848.5 450.5L1953.1 450.5L1900.8 541.0Z" fill="url(#g88)"/>
<path d="M1953.1 450.5L2005.4 541.0L1900.8 541.0Z" fill="url(#g89)"/>
<path d="M-86.6 541.0L18.0 541.0L-34.3 631.5Z" fill="url(#g90)"/>
<path d="M18.0 541.0L70.3 631.5L-34.3 631.5Z" fill="url(#g91)"/>
<path d="M18.0 541.0L122.6 541.0L70.3 631.5Z" fill="url(#g92)"/>
<path d="M122.6 541.0L174.9 631.5L70.3 631.5Z" fill="url(#g93)"/>
<path d="M122.6 541.0L227.2 541.0L174.9 631.5Z" fill="url(#g94)"/>
<path d="M1691.6 541.0L1796.2 541.0L1743.9 631.5Z" fill="url(#g95)"/>
<path d="M1796.2 541.0L1848.5 631.5L1743.9 631.5Z" fill="url(#g96)"/>
<path d="M1796.2 541.0L1900.8 541.0L1848.5 631.5Z" fill="url(#g97)"/>
<path d="M1900.8 541.0L1953.1 631.5L1848.5 631.5Z" fill="url(#g98)"/>
<path d="M1900.8 541.0L2005.4 541.0L1953.1 631.5Z" fill="url(#g99)"/>
<path d="M-34.3 631.5L18.0 722.0L-86.6 722.0Z" fill="url(#g100)"/>
<path d="M-34.3 631.5L70.3 631.5L18.0 722.0Z" fill="url(#g101)"/>
<path d="M70.3 631.5L122.6 722.0L18.0 722.0Z" fill="url(#g102)"/>
<path d="M70.3 631.5L174.9 631.5L122.6 722.0Z" fill="url(#g103)"/>
<path d="M174.9 631.5L227.2 722.0L122.6 722.0Z" fill="url(#g104)"/>
<path d="M1743.9 631.5L1796.2 722.0L1691.6 722.0Z" fill="url(#g105)"/>
<path d="M1743.9 631.5L1848.5 631.5L1796.2 722.0Z" fill="url(#g106)"/>
<path d="M1848.5 631.5L1900.8 722.0L1796.2 722.0Z" fill="url(#g107)"/>
<path d="M1848.5 631.5L1953.1 631.5L1900.8 722.0Z" fill="url(#g108)"/>
<path d="M1953.1 631.5L2005.4 722.0L1900.8 722.0Z" fill="url(#g109)"/>
<path d="M-86.6 722.0L18.0 722.0L-34.3 812.5Z" fill="url(#g110)"/>
<path d="M18.0 722.0L70.3 812.5L-34.3 812.5Z" fill="url(#g111)"/>
<path d="M18.0 722.0L122.6 722.0L70.3 812.5Z" fill="url(#g112)"/>
<path d="M122.6 722.0L174.9 812.5L70.3 812.5Z" fill="url(#g113)"/>
<path d="M122.6 722.0L227.2 722.0L174.9 812.5Z" fill="url(#g114)"/>
<path d="M1691.6 722.0L1796.2 722.0L1743.9 812.5Z" fill="url(#g115)"/>
<path d="M1796.2 722.0L1848.5 812.5L1743.9 812.5Z" fill="url(#g116)"/>
<path d="M1796.2 722.0L1900.8 722.0L1848.5 812.5Z" fill="url(#g117)"/>
<path d="M1900.8 722.0L1953.1 812.5L1848.5 812.5Z" fill="url(#g118)"/>
<path d="M1900.8 722.0L2005.4 722.0L1953.1 812.5Z" fill="url(#g119)"/>
<path d="M-34.3 812.5L18.0 903.0L-86.6 903.0Z" fill="url(#g120)"/>
<path d="M-34.3 812.5L70.3 812.5L18.0 903.0Z" fill="url(#g121)"/>
<path d="M70.3 812.5L122.6 903.0L18.0 903.0Z" fill="url(#g122)"/>
<path d="M70.3 812.5L174.9 812.5L122.6 903.0Z" fill="url(#g123)"/>
<path d="M174.9 812.5L227.2 903.0L122.6 903.0Z" fill="url(#g124)"/>
<path d="M1743.9 812.5L1796.2 903.0L1691.6 903.0Z" fill="url(#g125)"/>
<path d="M1743.9 812.5L1848.5 812.5L1796.2 903.0Z" fill="url(#g126)"/>
<path d="M1848.5 812.5L1900.8 903.0L1796.2 903.0Z" fill="url(#g127)"/>
<path d="M1848.5 812.5L1953.1 812.5L1900.8 903.0Z" fill="url(#g128)"/>
<path d="M1953.1 812.5L2005.4 903.0L1900.8 903.0Z" fill="url(#g129)"/>
<path d="M-86.6 903.0L18.0 903.0L-34.3 993.5Z" fill="url(#g130)"/>
<path d="M18.0 903.0L70.3 993.5L-34.3 993.5Z" fill="url(#g131)"/>
<path d="M18.0 903.0L122.6 903.0L70.3 993.5Z" fill="url(#g132)"/>
<path d="M122.6 903.0L174.9 993.5L70.3 993.5Z" fill="url(#g133)"/>
<path d="M122.6 903.0L227.2 903.0L174.9 993.5Z" fill="url(#g134)"/>
<path d="M1691.6 903.0L1796.2 903.0L1743.9 993.5Z" fill="url(#g135)"/>
<path d="M1796.2 903.0L1848.5 993.5L1743.9 993.5Z" fill="url(#g136)"/>
<path d="M1796.2 903.0L1900.8 903.0L1848.5 993.5Z" fill="url(#g137)"/>
<path d="M1900.8 903.0L1953.1 993.5L1848.5 993.5Z" fill="url(#g138)"/>
<path d="M1900.8 903.0L2005.4 903.0L1953.1 993.5Z" fill="url(#g139)"/>
<path d="M-34.3 993.5L18.0 1084.0L-86.6 1084.0Z" fill="url(#g140)"/>
<path d="M-34.3 993.5L70.3 993.5L18.0 1084.0Z" fill="url(#g141)"/>
<path d="M70.3 993.5L122.6 1084.0L18.0 1084.0Z" fill="url(#g142)"/>
<path d="M70.3 993.5L174.9 993.5L122.6 1084.0Z" fill="url(#g143)"/>
<path d="M174.9 993.5L227.2 1084.0L122.6 1084.0Z" fill="url(#g144)"/>
<path d="M1743.9 993.5L1796.2 1084.0L1691.6 1084.0Z" fill="url(#g145)"/>
<path d="M1743.9 993.5L1848.5 993.5L1796.2 1084.0Z" fill="url(#g146)"/>
<path d="M1848.5 993.5L1900.8 1084.0L1796.2 1084.0Z" fill="url(#g147)"/>
<path d="M1848.5 993.5L1953.1 993.5L1900.8 1084.0Z" fill="url(#g148)"/>
<path d="M1953.1 993.5L2005.4 1084.0L1900.8 1084.0Z" fill="url(#g149)"/>
<path d="M-86.6 1084.0L18.0 1084.0L-34.3 1174.5Z" fill="url(#g150)"/>
<path d="M18.0 1084.0L70.3 1174.5L-34.3 1174.5Z" fill="url(#g151)"/>
<path d="M18.0 1084.0L122.6 1084.0L70.3 1174.5Z" fill="url(#g152)"/>
<path d="M122.6 1084.0L174.9 1174.5L70.3 1174.5Z" fill="url(#g153)"/>
<path d="M122.6 1084.0L227.2 1084.0L174.9 1174.5Z" fill="url(#g154)"/>
<path d="M1691.6 1084.0L1796.2 1084.0L1743.9 1174.5Z" fill="url(#g155)"/>
<path d="M1796.2 1084.0L1848.5 1174.5L1743.9 1174.5Z" fill="url(#g156)"/>
<path d="M1796.2 1084.0L1900.8 1084.0L1848.5 1174.5Z" fill="url(#g157)"/>
<path d="M1900.8 1084.0L1953.1 1174.5L1848.5 1174.5Z" fill="url(#g158)"/>
<path d="M1900.8 1084.0L2005.4 1084.0L1953.1 1174.5Z" fill="url(#g159)"/>
<path d="M0 -2.0H1920M0 88.5H1920M0 179.0H1920M0 269.5H1920M0 360.0H1920M0 450.5H1920M0 541.0H1920M0 631.5H1920M0 722.0H1920M0 812.5H1920M0 903.0H1920M0 993.5H1920M0 1084.0H1920M-2074.0 -2.0L-1442.9 1090.0M-2074.0 -2.0L-2705.1 1090.0M-1969.4 -2.0L-1338.3 1090.0M-1969.4 -2.0L-2600.5 1090.0M-1864.8 -2.0L-1233.7 1090.0M-1864.8 -2.0L-2495.9 1090.0M-1760.2 -2.0L-1129.1 1090.0M-1760.2 -2.0L-2391.3 1090.0M-1655.6 -2.0L-1024.5 1090.0M-1655.6 -2.0L-2286.7 1090.0M-1551.0 -2.0L-919.9 1090.0M-1551.0 -2.0L-2182.1 1090.0M-1446.4 -2.0L-815.3 1090.0M-1446.4 -2.0L-2077.5 1090.0M-1341.8 -2.0L-710.7 1090.0M-1341.8 -2.0L-1972.9 1090.0M-1237.2 -2.0L-606.1 1090.0M-1237.2 -2.0L-1868.3 1090.0M-1132.6 -2.0L-501.5 1090.0M-1132.6 -2.0L-1763.7 1090.0M-1028.0 -2.0L-396.9 1090.0M-1028.0 -2.0L-1659.1 1090.0M-923.4 -2.0L-292.3 1090.0M-923.4 -2.0L-1554.5 1090.0M-818.8 -2.0L-187.7 1090.0M-818.8 -2.0L-1449.9 1090.0M-714.2 -2.0L-83.1 1090.0M-714.2 -2.0L-1345.3 1090.0M-609.6 -2.0L21.5 1090.0M-609.6 -2.0L-1240.7 1090.0M-505.0 -2.0L126.1 1090.0M-505.0 -2.0L-1136.1 1090.0M-400.4 -2.0L230.7 1090.0M-400.4 -2.0L-1031.5 1090.0M-295.8 -2.0L335.3 1090.0M-295.8 -2.0L-926.9 1090.0M-191.2 -2.0L439.9 1090.0M-191.2 -2.0L-822.3 1090.0M-86.6 -2.0L544.5 1090.0M-86.6 -2.0L-717.7 1090.0M18.0 -2.0L649.1 1090.0M18.0 -2.0L-613.1 1090.0M122.6 -2.0L753.7 1090.0M122.6 -2.0L-508.5 1090.0M227.2 -2.0L858.3 1090.0M227.2 -2.0L-403.9 1090.0M331.8 -2.0L962.9 1090.0M331.8 -2.0L-299.3 1090.0M436.4 -2.0L1067.5 1090.0M436.4 -2.0L-194.7 1090.0M541.0 -2.0L1172.1 1090.0M541.0 -2.0L-90.1 1090.0M645.6 -2.0L1276.7 1090.0M645.6 -2.0L14.5 1090.0M750.2 -2.0L1381.3 1090.0M750.2 -2.0L119.1 1090.0M854.8 -2.0L1485.9 1090.0M854.8 -2.0L223.7 1090.0M959.4 -2.0L1590.5 1090.0M959.4 -2.0L328.3 1090.0M1064.0 -2.0L1695.1 1090.0M1064.0 -2.0L432.9 1090.0M1168.6 -2.0L1799.7 1090.0M1168.6 -2.0L537.5 1090.0M1273.2 -2.0L1904.3 1090.0M1273.2 -2.0L642.1 1090.0M1377.8 -2.0L2008.9 1090.0M1377.8 -2.0L746.7 1090.0M1482.4 -2.0L2113.5 1090.0M1482.4 -2.0L851.3 1090.0M1587.0 -2.0L2218.1 1090.0M1587.0 -2.0L955.9 1090.0M1691.6 -2.0L2322.7 1090.0M1691.6 -2.0L1060.5 1090.0M1796.2 -2.0L2427.3 1090.0M1796.2 -2.0L1165.1 1090.0M1900.8 -2.0L2531.9 1090.0M1900.8 -2.0L1269.7 1090.0M2005.4 -2.0L2636.5 1090.0M2005.4 -2.0L1374.3 1090.0M2110.0 -2.0L2741.1 1090.0M2110.0 -2.0L1478.9 1090.0M2214.6 -2.0L2845.7 1090.0M2214.6 -2.0L1583.5 1090.0M2319.2 -2.0L2950.3 1090.0M2319.2 -2.0L1688.1 1090.0M2423.8 -2.0L3054.9 1090.0M2423.8 -2.0L1792.7 1090.0M2528.4 -2.0L3159.5 1090.0M2528.4 -2.0L1897.3 1090.0M2633.0 -2.0L3264.1 1090.0M2633.0 -2.0L2001.9 1090.0M2737.6 -2.0L3368.7 1090.0M2737.6 -2.0L2106.5 1090.0M2842.2 -2.0L3473.3 1090.0M2842.2 -2.0L2211.1 1090.0M2946.8 -2.0L3577.9 1090.0M2946.8 -2.0L2315.7 1090.0M3051.4 -2.0L3682.5 1090.0M3051.4 -2.0L2420.3 1090.0M3156.0 -2.0L3787.1 1090.0M3156.0 -2.0L2524.9 1090.0M3260.6 -2.0L3891.7 1090.0M3260.6 -2.0L2629.5 1090.0M3365.2 -2.0L3996.3 1090.0M3365.2 -2.0L2734.1 1090.0M3469.8 -2.0L4100.9 1090.0M3469.8 -2.0L2838.7 1090.0M3574.4 -2.0L4205.5 1090.0M3574.4 -2.0L2943.3 1090.0M3679.0 -2.0L4310.1 1090.0M3679.0 -2.0L3047.9 1090.0M3783.6 -2.0L4414.7 1090.0M3783.6 -2.0L3152.5 1090.0M3888.2 -2.0L4519.3 1090.0M3888.2 -2.0L3257.1 1090.0M3992.8 -2.0L4623.9 1090.0M3992.8 -2.0L3361.7 1090.0M4097.4 -2.0L4728.5 1090.0M4097.4 -2.0L3466.3 1090.0" stroke="#04060a" stroke-opacity="0.5" stroke-width="1.4" fill="none"/>
<rect x="0" y="0" width="1920" height="2" fill="#0b0e15"/>
</svg>
<div id="panel">
<div class="title">Product id: 37938, 31...</div>
<div class="btn-cancel">CANCEL</div>
<div class="btn-live">GO LIVE</div>
<div class="card" style="top:124px;height:188px">
<div class="field" style="left:30px;top:30px;width:666px"><div class="lbl">Product Id <b>*</b></div><div class="val">37935</div></div>
<div class="field" style="left:712px;top:30px;width:666px"><div class="lbl">Lobby brand name <b>*</b></div><div class="val">Casino Canada Ontario</div></div>
<div class="field" style="left:30px;top:102px;width:1348px"><div class="lbl" style="letter-spacing:-0.55px">RGS Type <b style="letter-spacing:0">*</b></div><div class="val">Bolt</div><svg width="10" height="5" style="position:absolute;left:1318px;top:24.5px"><path d="M0 0 L10 0 L5 5 Z" fill="#555"/></svg></div>
</div>
<div class="card" style="top:336px;height:164px">
<div class="sec-title" style="top:31.2px">In Game Icon</div>
<div class="sec-sub" style="top:54px">Enable or disable “Icon” in IGL</div>
<div class="toggle" style="top:40px"><div class="track"></div><div class="thumb"></div></div>
<div class="enabled" style="top:42px">Enabled</div>
<div class="info" style="top:92px">The top-level setting governs the visibility of the In Game Icon. Turning it off will render the rest of the settings and the Icon itself invisible to players.</div>
</div>
<div class="card" style="top:524px;height:600px">
<div class="sec-title" style="top:31.2px">Game layout</div>
<div class="sec-sub" style="top:54px">Enable or disable “Games” in IGL</div>
<div class="toggle" style="top:40px"><div class="track"></div><div class="thumb"></div></div>
<div class="enabled" style="top:42px">Enabled</div>
<div class="success" style="top:101px"><svg width="22" height="22" viewBox="0 0 24 24" style="position:absolute;left:16px;top:12px"><path fill="#2f7033" d="M16.59 7.58 10 14.17l-3.59-3.58L5 12l5 5 8-8zM12 2C6.48 2 2 6.48 2 12s4.48 10 10 10 10-4.48 10-10S17.52 2 12 2zm0 18c-4.42 0-8-3.58-8-8s3.58-8 8-8 8 3.58 8 8-3.58 8-8 8z"/></svg><div style="position:absolute;left:50px;top:16px;font-size:15.5px;font-weight:bold;color:#1e3f22;white-space:nowrap">Validation completed for games.json</div><div style="position:absolute;left:50px;top:43px;font-size:14.3px;color:#1e4620;white-space:nowrap">30 games matched with Games in Use out of 100 uploaded games.</div></div>
<div style="position:absolute;left:32px;top:205px;font-size:20px;color:#1f1f1f;white-space:nowrap;-webkit-text-stroke:0.3px #1f1f1f">Matched Games</div>
<div style="position:absolute;left:32px;top:234.3px;font-size:16.4px;color:#1f1f1f;white-space:nowrap">Select the games you want to keep in your final configuration</div>
<div class="cb" style="top:283px"><div style="position:absolute;left:4px;top:8px;width:10px;height:2px;background:#fff"></div></div>
<div class="th" style="left:86px;top:284px">Game name</div>
<div class="th" style="left:517px;top:284px">MID/CID</div>
<div class="th" style="left:948px;top:284px;font-size:14.5px">Last gameplay in hours</div>
<div class="row-line" style="top:319px"></div>
<div class="cb" style="top:337px"><svg width="18" height="18" viewBox="0 0 18 18" style="position:absolute;left:0;top:0"><path d="M2.9 8.7 L6.9 12.6 L15.1 4.6" fill="none" stroke="#fff" stroke-width="2.1"/></svg></div>
<div class="td" style="left:86.5px;top:338.9px;font-size:13.3px;-webkit-text-stroke:0.4px #222">Break Da Bank Again Maple Moolah</div>
<div class="td" style="left:517px;top:338.1px;font-size:12.8px">10245 / 10245</div>
<div class="td" style="left:948px;top:338px">10245 hours</div>
<div class="row-line" style="top:371px"></div>
<div class="cb" style="top:389px"><svg width="18" height="18" viewBox="0 0 18 18" style="position:absolute;left:0;top:0"><path d="M2.9 8.7 L6.9 12.6 L15.1 4.6" fill="none" stroke="#fff" stroke-width="2.1"/></svg></div>
<div class="td" style="left:86.5px;top:390.9px;font-size:13.3px;-webkit-text-stroke:0.4px #222">Break Da Bank Again Maple Moolah</div>
<div class="td" style="left:517px;top:390.1px;font-size:12.8px">10245 / 10245</div>
<div class="td" style="left:948px;top:390px">10245 hours</div>
<div class="row-line" style="top:423px"></div>
<div class="cb" style="top:441px"><svg width="18" height="18" viewBox="0 0 18 18" style="position:absolute;left:0;top:0"><path d="M2.9 8.7 L6.9 12.6 L15.1 4.6" fill="none" stroke="#fff" stroke-width="2.1"/></svg></div>
<div class="td" style="left:86.5px;top:442.9px;font-size:13.3px;-webkit-text-stroke:0.4px #222">Break Da Bank Again Maple Moolah</div>
<div class="td" style="left:517px;top:442.1px;font-size:12.8px">10245 / 10245</div>
<div class="td" style="left:948px;top:442px">10245 hours</div>
<div class="row-line" style="top:475px"></div>
<div class="cb" style="top:493px"><svg width="18" height="18" viewBox="0 0 18 18" style="position:absolute;left:0;top:0"><path d="M2.9 8.7 L6.9 12.6 L15.1 4.6" fill="none" stroke="#fff" stroke-width="2.1"/></svg></div>
<div class="td" style="left:86.5px;top:494.9px;font-size:13.3px;-webkit-text-stroke:0.4px #222">Break Da Bank Again Maple Moolah</div>
<div class="td" style="left:517px;top:494.1px;font-size:12.8px">10245 / 10245</div>
<div class="td" style="left:948px;top:494px">10245 hours</div>
<div class="row-line" style="top:527px"></div>
<div style="position:absolute;left:1349px;top:320px;width:12px;height:200px;background:linear-gradient(to right,rgba(0,0,0,0),rgba(0,0,0,0.05))"></div>
<div style="position:absolute;left:1365px;top:320px;width:7px;height:150px;border-radius:4px;background:#bdbdbd"></div>
</div>
</div>
</body></html>
